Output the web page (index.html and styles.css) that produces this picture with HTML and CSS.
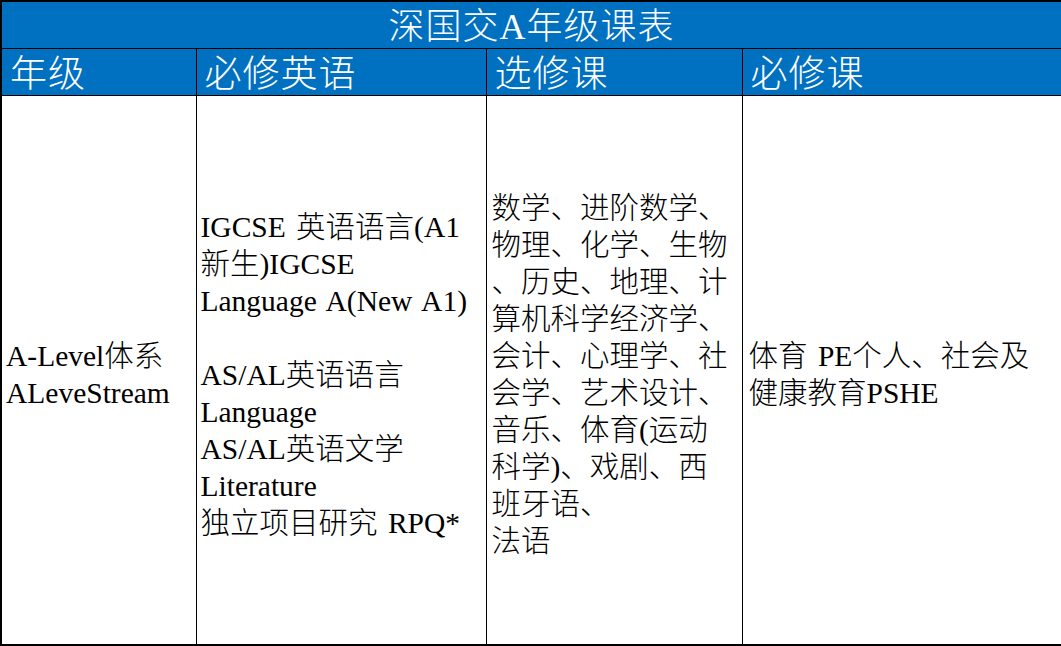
FILE: index.html
```html
<!DOCTYPE html>
<html lang="zh-CN">
<head>
<meta charset="utf-8">
<title>深国交A年级课表</title>
<link rel="stylesheet" href="styles.css">
</head>
<body>
<table class="sheet">
  <colgroup>
    <col class="col-grade">
    <col class="col-english">
    <col class="col-elective">
    <col class="col-required">
  </colgroup>
  <tr class="title-row">
    <th colspan="4">深国交A年级课表</th>
  </tr>
  <tr class="head-row">
    <th>年级</th>
    <th>必修英语</th>
    <th>选修课</th>
    <th>必修课</th>
  </tr>
  <tr class="body-row">
    <td class="grade">A-Level体系<br>ALeveStream</td>
    <td class="english">IGCSE 英语语言(A1<br>新生)IGCSE<br>Language A(New A1)<br>&nbsp;<br>AS/AL英语语言<br>Language<br>AS/AL英语文学<br>Literature<br>独立项目研究 RPQ*</td>
    <td class="elective">数学、进阶数学、<br>物理、化学、生物<br>、历史、地理、计<br>算机科学经济学、<br>会计、心理学、社<br>会学、艺术设计、<br>音乐、体育(运动<br>科学)、戏剧、西<br>班牙语、<br>法语</td>
    <td class="required">体育 PE个人、社会及<br>健康教育PSHE</td>
  </tr>
</table>
</body>
</html>
```
FILE: styles.css
```css
html, body {
  margin: 0;
  padding: 0;
  background: #ffffff;
}

.sheet {
  width: 1061px;
  height: 646px;
  border-collapse: collapse;
  table-layout: fixed;
  border: 2px solid #000;
  font-family: "Liberation Serif", "Noto Sans CJK SC", serif;
  font-weight: 300;
  color: #000;
}

.col-grade { width: 195px; }
.col-english { width: 290px; }
.col-elective { width: 256px; }
.col-required { width: 320px; }

.sheet th,
.sheet td {
  border: 1px solid #000;
  padding: 0;
}

.title-row th {
  height: 42px;
  background: #0070c0;
  color: #fff;
  font-weight: 300;
  font-size: 36px;
  line-height: 40px;
  padding-top: 4px;
  text-align: center;
  letter-spacing: 1px;
}

.head-row th {
  height: 38px;
  background: #0070c0;
  color: #fff;
  font-weight: 300;
  font-size: 37px;
  line-height: 40px;
  padding-top: 6px;
  padding-left: 8px;
  text-align: left;
  letter-spacing: 1px;
}

.body-row td {
  vertical-align: middle;
  font-size: 29.5px;
  line-height: 37px;
  text-align: left;
  white-space: nowrap;
  word-spacing: 3px;
  padding-top: 10px;
}

.body-row .grade { padding-left: 4px; }
.body-row .english { padding-left: 4px; }
.body-row .elective { padding-left: 5px; }
.body-row .required { padding-left: 6px; }
```
